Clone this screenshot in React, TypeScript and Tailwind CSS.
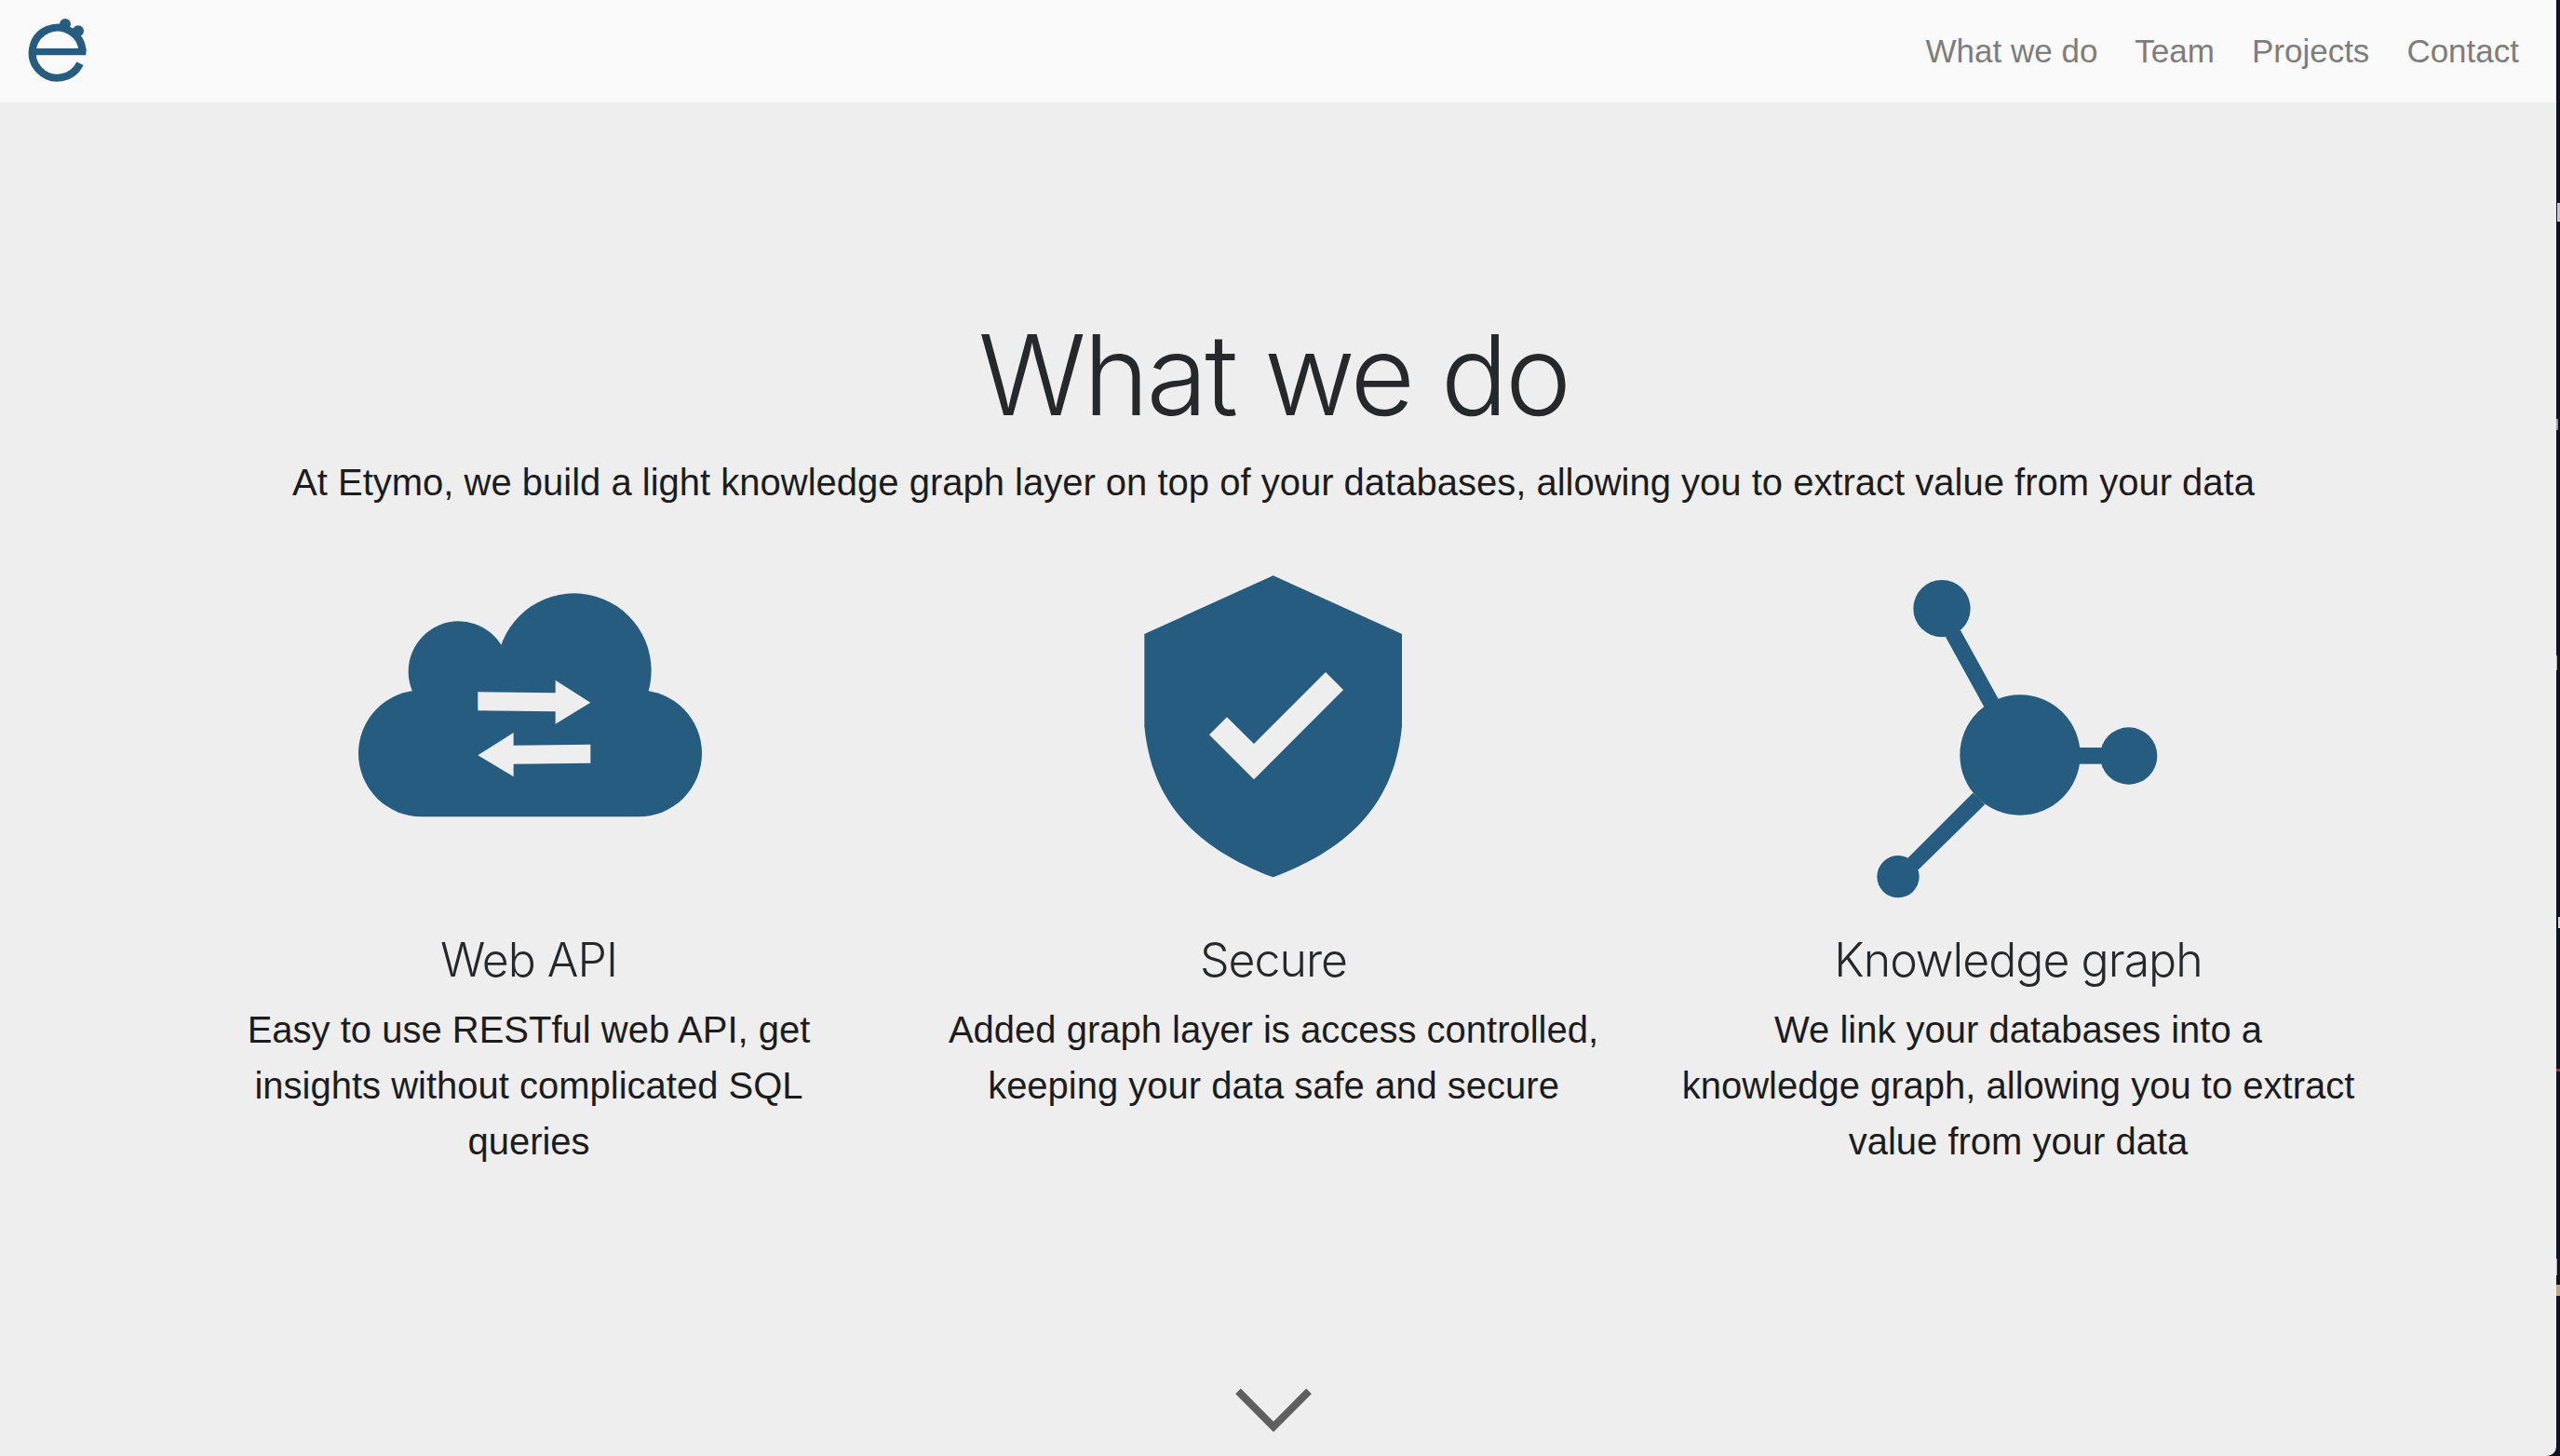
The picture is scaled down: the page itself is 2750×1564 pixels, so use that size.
const blue = "#265c80";

const Logo = () => (
  <svg width="200" height="110" viewBox="0 0 600 330" fill="none">
    <path d="M258 205 A81 81 0 1 1 266 167" stroke={blue} strokeWidth="24" />
    <path d="M105 167 H277" stroke={blue} strokeWidth="22" />
    <circle cx="210" cy="78" r="18" fill={blue} />
    <circle cx="252" cy="100" r="18" fill={blue} />
  </svg>
);

const CloudIcon = () => (
  <svg width="420" height="300" viewBox="-6 0 1260 900" className="shrink-0">
    <circle cx="770" cy="361" r="249" fill={blue} />
    <circle cx="398" cy="364" r="162" fill={blue} />
    <rect x="75" y="424" width="1107" height="408" rx="204" fill={blue} />
    <polygon points="460,430 710,433 710,392 823,464 710,533 710,493 460,490" fill="#eeeeee" />
    <polygon points="823,599 575,602 575,561 460,634 575,703 575,662 823,659" fill="#eeeeee" />
  </svg>
);

const ShieldIcon = () => (
  <svg width="340" height="350" viewBox="-6 0 1020 1050" className="shrink-0">
    <path d="M503 55 L918 243 V540 C895 780 760 930 503 1027 C246 930 111 780 88 540 V243 Z" fill={blue} />
    <polygon points="297,568 354,511 441,597 672,366 729,423 441,712" fill="#eeeeee" />
  </svg>
);

const GraphIcon = () => (
  <svg width="360" height="380" viewBox="-6 0 1080 1140" className="shrink-0">
    <circle cx="540" cy="633" r="194" fill={blue} />
    <circle cx="890" cy="636" r="92" fill={blue} />
    <circle cx="288" cy="161" r="92" fill={blue} />
    <circle cx="147" cy="1025" r="68" fill={blue} />
    <polygon points="300,253 348,231 470,452 424,478" fill={blue} />
    <rect x="725" y="609" width="85" height="53" fill={blue} />
    <polygon points="178,965 388,755 427,792 212,1003" fill={blue} />
  </svg>
);

const features = [
  { title: "Web API", text: "Easy to use RESTful web API, get insights without complicated SQL queries", icon: <CloudIcon /> },
  { title: "Secure", text: "Added graph layer is access controlled, keeping your data safe and secure", icon: <ShieldIcon /> },
  { title: "Knowledge graph", text: "We link your databases into a knowledge graph, allowing you to extract value from your data", icon: <GraphIcon /> },
];

export default function App() {
  return (
    <div className="flex h-[1564px] w-[2750px] overflow-hidden bg-[#0d1420] font-['Liberation_Sans',sans-serif]">
      <div className="flex w-[2746px] shrink-0 flex-col rounded-br-[10px] bg-[#eeeeee]">
        <nav className="flex h-[110px] shrink-0 items-center justify-between bg-[#fafafa] pr-[40px]">
          <Logo />
          <div className="flex gap-[40px] text-[35px] text-[#7d7d7d]">
            <a href="#what">What we do</a>
            <a href="#team">Team</a>
            <a href="#projects">Projects</a>
            <a href="#contact">Contact</a>
          </div>
        </nav>

        <main className="flex flex-1 flex-col items-center pr-[10px] text-center">
          <h1 className="mt-[219px] font-['Inter',sans-serif] text-[120px] leading-[148px] font-light tracking-[-3px] text-[#26292c]">What we do</h1>
          <p className="mt-[11px] text-[40px] leading-[60px] text-[#1c1c1c]">
            At Etymo, we build a light knowledge graph layer on top of your databases, allowing you to extract value from your data
          </p>

          <div className="mt-[52px] grid w-[2400px] grid-cols-3">
            {features.map((f) => (
              <div key={f.title} className="flex flex-col items-center px-[37px]">
                <div className="flex h-[400px] justify-center">{f.icon}</div>
                <h3 className="font-['Inter',sans-serif] text-[50px] leading-[62px] font-light tracking-[-1px] text-[#26292c]">{f.title}</h3>
                <p className="mt-[14px] text-[40px] leading-[60px] text-[#1c1c1c]">{f.text}</p>
              </div>
            ))}
          </div>

          <svg width="180" height="104" viewBox="-6 0 540 312" fill="none" className="mt-auto">
            <path d="M150 103 L264 218 L378 103" stroke="#5f5f5f" strokeWidth="24" />
          </svg>
        </main>
      </div>

      {/* sliver of the desktop behind the window */}
      <div className="relative flex-1">
        <div className="absolute top-[218px] right-0 h-[20px] w-[3px] bg-[#c8c8c8]" />
        <div className="absolute top-[450px] left-0 h-[12px] w-[2px] bg-[#9a9a9a]" />
        <div className="absolute top-[704px] left-0 h-[16px] w-[1px] bg-[#b0b0b0]" />
        <div className="absolute top-[985px] right-0 h-[12px] w-[2px] bg-[#d8d8d8]" />
        <div className="absolute top-[1148px] left-0 h-[3px] w-full bg-[#a03040]" />
        <div className="absolute top-[1352px] left-0 h-[18px] w-[1px] bg-[#a8a8a8]" />
        <div className="absolute top-[1380px] left-0 h-[12px] w-full bg-[#b8a888]" />
      </div>
    </div>
  );
}
